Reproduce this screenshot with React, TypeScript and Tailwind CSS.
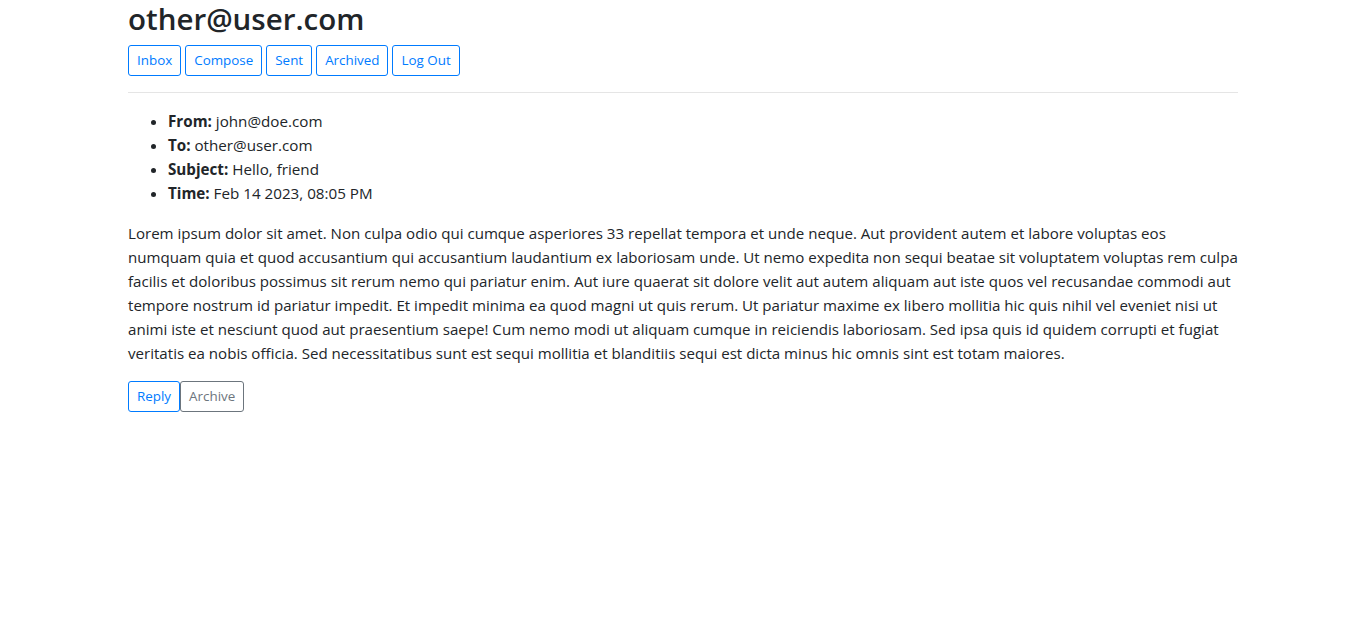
export default function App() {
  const nav = ["Inbox", "Compose", "Sent", "Archived", "Log Out"]
  const lines = [
    "Lorem ipsum dolor sit amet. Non culpa odio qui cumque asperiores 33 repellat tempora et unde neque. Aut provident autem et labore voluptas eos",
    "numquam quia et quod accusantium qui accusantium laudantium ex laboriosam unde. Ut nemo expedita non sequi beatae sit voluptatem voluptas rem culpa",
    "facilis et doloribus possimus sit rerum nemo qui pariatur enim. Aut iure quaerat sit dolore velit aut autem aliquam aut iste quos vel recusandae commodi aut",
    "tempore nostrum id pariatur impedit. Et impedit minima ea quod magni ut quis rerum. Ut pariatur maxime ex libero mollitia hic quis nihil vel eveniet nisi ut",
    "animi iste et nesciunt quod aut praesentium saepe! Cum nemo modi ut aliquam cumque in reiciendis laboriosam. Sed ipsa quis id quidem corrupti et fugiat",
    "veritatis ea nobis officia. Sed necessitatibus sunt est sequi mollitia et blanditiis sequi est dicta minus hic omnis sint est totam maiores.",
  ]

  return (
    <div className="min-h-screen bg-white text-[#212529] font-['Segoe_UI','Open_Sans',sans-serif]">
      <div className="ml-[128px] w-[1110px]">
        <h3 className="text-[29.5px] font-semibold leading-[33.6px] pt-[2px]">other@user.com</h3>
        <div className="flex gap-[4px] mt-[9px]">
          {nav.map((n) => (
            <button
              key={n}
              className="h-[31px] px-2 text-[13.4px] leading-[21px] text-[#007bff] border border-[#007bff] rounded-[3px] bg-white"
            >
              {n}
            </button>
          ))}
        </div>
        <hr className="mt-4 mb-4 border-0 border-t border-[rgba(0,0,0,0.1)]" />
        <ul className="list-disc pl-10 text-[15.2px] leading-6">
          <li><b>From:</b> john@doe.com</li>
          <li><b>To:</b> other@user.com</li>
          <li><b>Subject:</b> Hello, friend</li>
          <li><b>Time:</b> Feb 14 2023, 08:05 PM</li>
        </ul>
        <p className="mt-4 text-[15.1px] leading-6">
          {lines.map((l, i) => (
            <span key={i}>
              {l}
              {i < lines.length - 1 && <br />}
            </span>
          ))}
        </p>
        <div className="flex mt-4">
          <button className="h-[31px] px-2 text-[13.4px] leading-[21px] text-[#007bff] border border-[#007bff] rounded-[3px] bg-white">
            Reply
          </button>
          <button className="h-[31px] px-2 text-[13.4px] leading-[21px] text-[#6c757d] border border-[#6c757d] rounded-[3px] bg-white">
            Archive
          </button>
        </div>
      </div>
    </div>
  )
}
